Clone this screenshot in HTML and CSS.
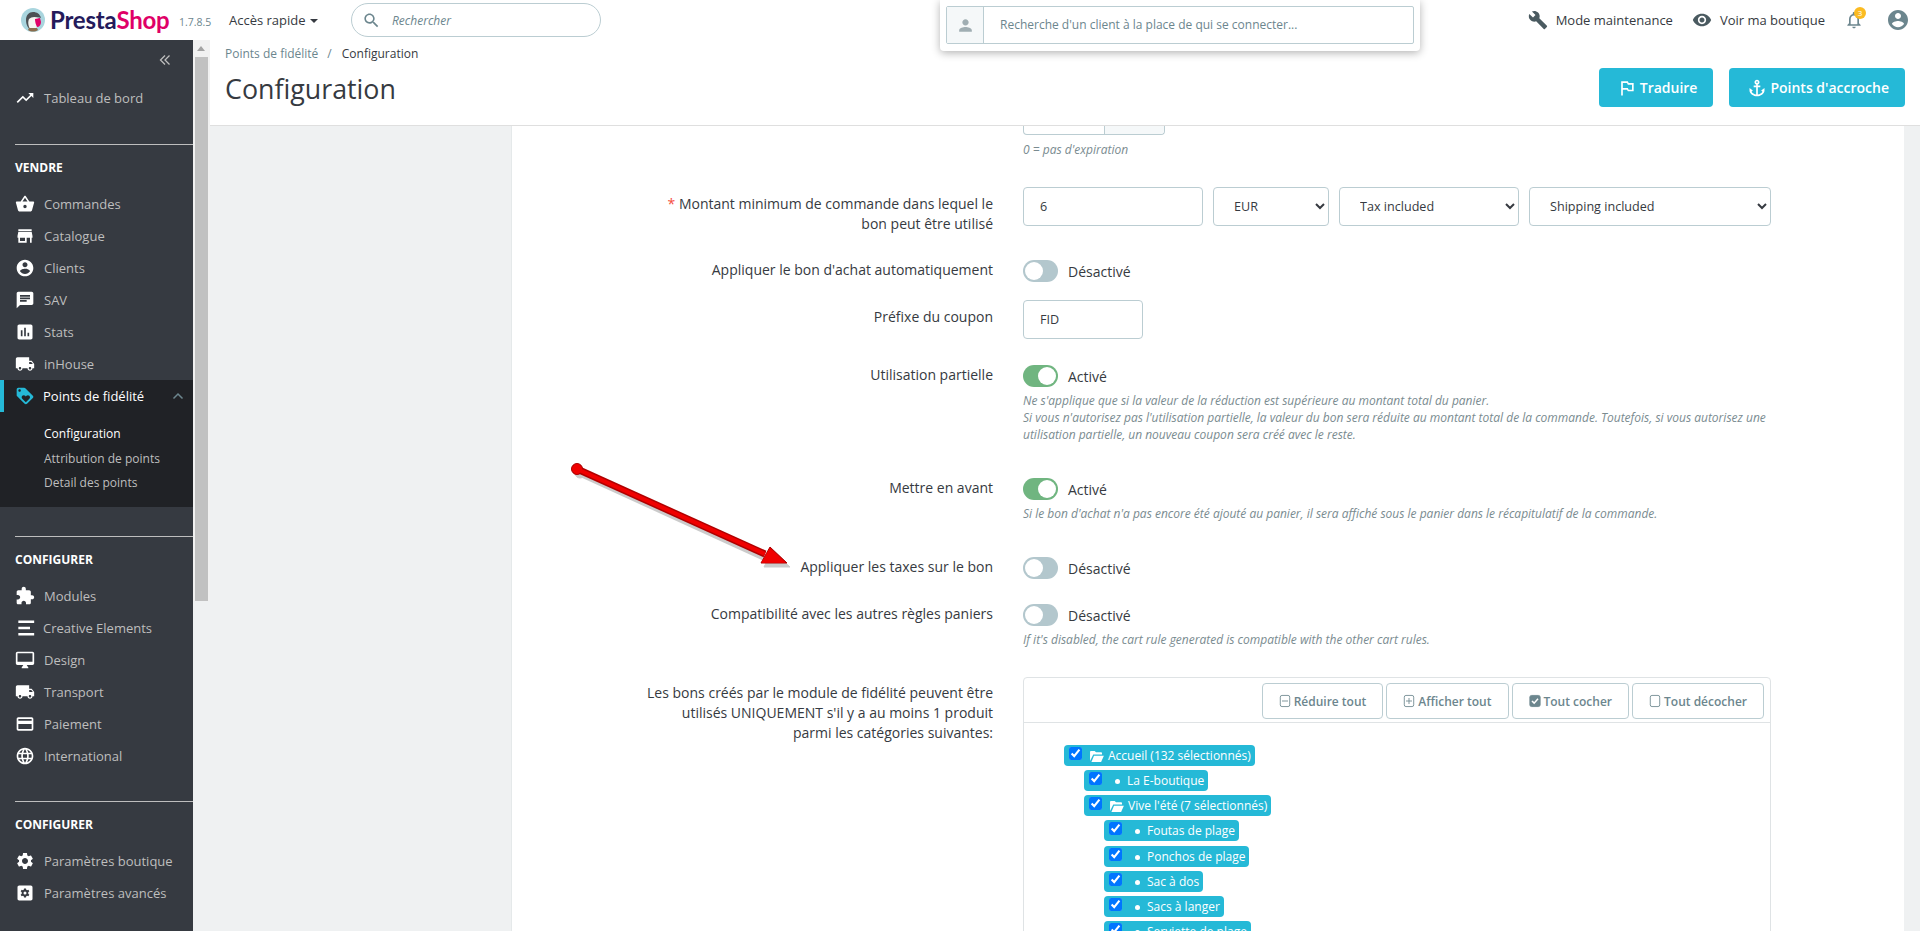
FILE: index.html
```html
<!DOCTYPE html>
<html>
    <head>
        <title>Configuration - PrestaShop</title>
        <meta charset="utf-8">
        <link rel="stylesheet" href="styles.css">
    </head>
    <body>
        <header class="topbar">
            <a class="logo">
                <svg class="puffin" viewBox="0 0 24 24">
                    <circle cx="12" cy="12" r="12" fill="#a9d5de"/>
                    <path d="M5 12c0-5 3-8 7-8s7 2 8 6c-2-1-4-1-6 0-3 2-4 7-3 12-4-1-6-5-6-10z" fill="#4c5054"/>
                    <path d="M8 11c2-2 6-3 9-1 1 4 0 9-3 11-3 1-5 0-6-2-1-3-1-6 0-8z" fill="#f4f4f0"/>
                    <path d="M14 11l5-1 1 4c0 3-2 5-4 5-1-2-2-5-2-8z" fill="#df0067"/>
                    <path d="M7 22c3 2 7 2 10 0l-1-2H8z" fill="#8a6d4d"/>
                </svg>
                <span class="logo-text"><span class="presta">Presta</span><span class="shop">Shop</span></span>
            </a>
            <span class="version">1.7.8.5</span>
            <a class="quick">Accès rapide <i class="caret"></i></a>
            <div class="search">
                <svg class="search-icon" viewBox="0 0 24 24"><path d="M15.5 14h-.79l-.28-.27C15.41 12.59 16 11.11 16 9.5 16 5.91 13.09 3 9.5 3S3 5.91 3 9.5 5.91 16 9.5 16c1.61 0 3.09-.59 4.23-1.57l.27.28v.79l5 4.99L20.49 19l-4.99-5zm-6 0C7.01 14 5 11.99 5 9.5S7.01 5 9.5 5 14 7.01 14 9.5 11.99 14 9.5 14z"/></svg>
                <span>Rechercher</span>
            </div>
            <div class="top-right">
                <a class="top-link">
                    <svg viewBox="0 0 24 24"><path d="M22.7 19l-9.1-9.1c.9-2.3.4-5-1.5-6.9-2-2-5-2.4-7.4-1.3L9 6 6 9 1.6 4.7C.4 7.1.9 10.1 2.9 12.1c1.9 1.9 4.6 2.4 6.9 1.5l9.1 9.1c.4.4 1 .4 1.4 0l2.3-2.3c.5-.4.5-1.1.1-1.4z"/></svg>
                    Mode maintenance
                </a>
                <a class="top-link">
                    <svg viewBox="0 0 24 24"><path d="M12 4.5C7 4.5 2.73 7.61 1 12c1.73 4.39 6 7.5 11 7.5s9.27-3.11 11-7.5c-1.73-4.39-6-7.5-11-7.5zM12 17c-2.76 0-5-2.24-5-5s2.24-5 5-5 5 2.24 5 5-2.24 5-5 5zm0-8c-1.66 0-3 1.34-3 3s1.34 3 3 3 3-1.34 3-3-1.34-3-3-3z"/></svg>
                    Voir ma boutique
                </a>
                <a class="bell">
                    <svg viewBox="0 0 24 24"><path d="M12 22c1.1 0 2-.9 2-2h-4c0 1.1.9 2 2 2zm6-6v-5c0-3.07-1.63-5.64-4.5-6.32V4c0-.83-.67-1.5-1.5-1.5s-1.5.67-1.5 1.5v.68C7.64 5.36 6 7.92 6 11v5l-2 2v1h16v-1l-2-2zm-2 1H8v-6c0-2.48 1.51-4.5 4-4.5s4 2.02 4 4.5v6z"/></svg>
                    <span class="badge">3</span>
                </a>
                <svg class="avatar" viewBox="2 2 20 20"><path d="M12 2C6.48 2 2 6.48 2 12s4.48 10 10 10 10-4.48 10-10S17.52 2 12 2zm0 3c1.66 0 3 1.34 3 3s-1.34 3-3 3-3-1.34-3-3 1.34-3 3-3zm0 14.2c-2.5 0-4.71-1.28-6-3.22.03-1.99 4-3.08 6-3.08 1.99 0 5.97 1.09 6 3.08-1.29 1.94-3.5 3.22-6 3.22z"/></svg>
            </div>
        </header>

        <div class="client-pop">
            <div class="client-group">
                <span class="client-addon"><svg viewBox="0 0 24 24"><path d="M12 12c2.21 0 4-1.79 4-4s-1.79-4-4-4-4 1.79-4 4 1.79 4 4 4zm0 2c-2.67 0-8 1.34-8 4v2h16v-2c0-2.66-5.33-4-8-4z"/></svg></span>
                <span class="client-input">Recherche d'un client à la place de qui se connecter...</span>
            </div>
        </div>

        <div class="layout">
            <nav class="sidebar">
                <div class="collapse">
                    <svg viewBox="0 0 14 14"><path d="M7 2.5L2.5 7 7 11.5M11.5 2.5L7 7l4.5 4.5"/></svg>
                </div>
                <ul class="menu first">
                    <li><svg viewBox="0 0 24 24"><path d="M16 6l2.29 2.29-4.88 4.88-4-4L2 16.59 3.41 18l6-6 4 4 6.3-6.29L22 12V6z"/></svg>Tableau de bord</li>
                </ul>

                <div class="section">
                    <h4>VENDRE</h4>
                    <ul class="menu">
                        <li><svg viewBox="0 0 24 24"><path d="M17.21 9l-4.38-6.56c-.19-.28-.51-.42-.83-.42-.32 0-.64.14-.83.43L6.79 9H2c-.55 0-1 .45-1 1 0 .09.01.18.04.27l2.54 9.27c.23.84 1 1.46 1.92 1.46h13c.92 0 1.69-.62 1.93-1.46l2.54-9.27L23 10c0-.55-.45-1-1-1h-4.79zM9 9l3-4.4L15 9H9zm3 8c-1.1 0-2-.9-2-2s.9-2 2-2 2 .9 2 2-.9 2-2 2z"/></svg>Commandes</li>
                        <li><svg viewBox="0 0 24 24"><path d="M20 4H4v2h16V4zm1 10v-2l-1-5H4l-1 5v2h1v6h10v-6h4v6h2v-6h1zm-9 4H6v-4h6v4z"/></svg>Catalogue</li>
                        <li><svg viewBox="0 0 24 24"><path d="M12 2C6.48 2 2 6.48 2 12s4.48 10 10 10 10-4.48 10-10S17.52 2 12 2zm0 3c1.66 0 3 1.34 3 3s-1.34 3-3 3-3-1.34-3-3 1.34-3 3-3zm0 14.2c-2.5 0-4.71-1.28-6-3.22.03-1.99 4-3.08 6-3.08 1.99 0 5.97 1.09 6 3.08-1.29 1.94-3.5 3.22-6 3.22z"/></svg>Clients</li>
                        <li><svg viewBox="0 0 24 24"><path d="M20 2H4c-1.1 0-1.99.9-1.99 2L2 22l4-4h14c1.1 0 2-.9 2-2V4c0-1.1-.9-2-2-2zM6 9h12v2H6V9zm8 5H6v-2h8v2zm4-6H6V6h12v2z"/></svg>SAV</li>
                        <li><svg viewBox="0 0 24 24"><path d="M19 3H5c-1.1 0-2 .9-2 2v14c0 1.1.9 2 2 2h14c1.1 0 2-.9 2-2V5c0-1.1-.9-2-2-2zM9 17H7v-7h2v7zm4 0h-2V7h2v10zm4 0h-2v-4h2v4z"/></svg>Stats</li>
                        <li><svg viewBox="0 0 24 24"><path d="M20 8h-3V4H3c-1.1 0-2 .9-2 2v11h2c0 1.66 1.34 3 3 3s3-1.34 3-3h6c0 1.66 1.34 3 3 3s3-1.34 3-3h2v-5l-3-4zM6 18.5c-.83 0-1.5-.67-1.5-1.5s.67-1.5 1.5-1.5 1.5.67 1.5 1.5-.67 1.5-1.5 1.5zm13.5-9l1.96 2.5H17V9.5h2.5zm-1.5 9c-.83 0-1.5-.67-1.5-1.5s.67-1.5 1.5-1.5 1.5.67 1.5 1.5-.67 1.5-1.5 1.5z"/></svg>inHouse</li>
                    </ul>
                    <div class="active-group">
                        <div class="active-item">
                            <svg viewBox="0 0 24 24"><path d="M21.41 11.58l-9-9C12.05 2.22 11.55 2 11 2H4c-1.1 0-2 .9-2 2v7c0 .55.22 1.05.59 1.42l9 9c.36.36.86.58 1.41.58s1.05-.22 1.41-.59l7-7c.37-.36.59-.86.59-1.41s-.23-1.06-.59-1.42zM5.5 7C4.67 7 4 6.33 4 5.5S4.67 4 5.5 4 7 4.67 7 5.5 6.33 7 5.5 7zm11.77 8.27L13 19.54l-4.27-4.27C8.28 14.81 8 14.19 8 13.5c0-1.38 1.12-2.5 2.5-2.5.69 0 1.32.28 1.77.74l.73.72.73-.73c.45-.45 1.08-.73 1.77-.73 1.38 0 2.5 1.12 2.5 2.5 0 .69-.28 1.32-.73 1.77z"/></svg>
                            Points de fidélité
                            <svg class="chevron" viewBox="0 0 14 14"><path d="M2.5 9.5L7 5l4.5 4.5"/></svg>
                        </div>
                        <ul class="submenu">
                            <li class="current">Configuration</li>
                            <li>Attribution de points</li>
                            <li>Detail des points</li>
                        </ul>
                    </div>
                </div>

                <div class="section">
                    <h4>CONFIGURER</h4>
                    <ul class="menu">
                        <li><svg viewBox="0 0 24 24"><path d="M20.5 11H19V7c0-1.1-.9-2-2-2h-4V3.5C13 2.12 11.88 1 10.5 1S8 2.12 8 3.5V5H4c-1.1 0-1.99.9-1.99 2v3.8H3.5c1.49 0 2.7 1.21 2.7 2.7s-1.21 2.7-2.7 2.7H2V20c0 1.1.9 2 2 2h3.8v-1.5c0-1.49 1.21-2.7 2.7-2.7 1.49 0 2.7 1.21 2.7 2.7V22H17c1.1 0 2-.9 2-2v-4h1.5c1.38 0 2.5-1.12 2.5-2.5S21.88 11 20.5 11z"/></svg>Modules</li>
                        <li class="tight"><svg viewBox="0 0 24 24"><path d="M4 3h19v3H4zM4 10.5h14v3H4zM4 18h19v3H4z"/></svg>Creative Elements</li>
                        <li><svg viewBox="0 0 24 24"><path d="M21 2H3c-1.1 0-2 .9-2 2v12c0 1.1.9 2 2 2h7l-2 3v1h8v-1l-2-3h7c1.1 0 2-.9 2-2V4c0-1.1-.9-2-2-2zm0 12H3V4h18v10z"/></svg>Design</li>
                        <li><svg viewBox="0 0 24 24"><path d="M20 8h-3V4H3c-1.1 0-2 .9-2 2v11h2c0 1.66 1.34 3 3 3s3-1.34 3-3h6c0 1.66 1.34 3 3 3s3-1.34 3-3h2v-5l-3-4zM6 18.5c-.83 0-1.5-.67-1.5-1.5s.67-1.5 1.5-1.5 1.5.67 1.5 1.5-.67 1.5-1.5 1.5zm13.5-9l1.96 2.5H17V9.5h2.5zm-1.5 9c-.83 0-1.5-.67-1.5-1.5s.67-1.5 1.5-1.5 1.5.67 1.5 1.5-.67 1.5-1.5 1.5z"/></svg>Transport</li>
                        <li><svg viewBox="0 0 24 24"><path d="M20 4H4c-1.11 0-1.99.89-1.99 2L2 18c0 1.11.89 2 2 2h16c1.11 0 2-.89 2-2V6c0-1.11-.89-2-2-2zm0 14H4v-6h16v6zm0-10H4V6h16v2z"/></svg>Paiement</li>
                        <li><svg viewBox="0 0 24 24"><path d="M11.99 2C6.47 2 2 6.48 2 12s4.47 10 9.99 10C17.52 22 22 17.52 22 12S17.52 2 11.99 2zm6.93 6h-2.95c-.32-1.25-.78-2.45-1.38-3.56 1.84.63 3.37 1.91 4.33 3.56zM12 4.04c.83 1.2 1.48 2.53 1.91 3.96h-3.82c.43-1.43 1.08-2.76 1.91-3.96zM4.26 14C4.1 13.36 4 12.69 4 12s.1-1.36.26-2h3.38c-.08.66-.14 1.32-.14 2 0 .68.06 1.34.14 2H4.26zm.82 2h2.95c.32 1.25.78 2.45 1.38 3.56-1.84-.63-3.37-1.9-4.33-3.56zm2.95-8H5.08c.96-1.66 2.49-2.93 4.33-3.56C8.81 5.55 8.35 6.75 8.03 8zM12 19.96c-.83-1.2-1.48-2.53-1.91-3.96h3.82c-.43 1.43-1.08 2.76-1.91 3.96zM14.34 14H9.66c-.09-.66-.16-1.32-.16-2 0-.68.07-1.35.16-2h4.68c.09.65.16 1.32.16 2 0 .68-.07 1.34-.16 2zm.25 5.56c.6-1.11 1.06-2.31 1.38-3.56h2.95c-.96 1.65-2.49 2.93-4.33 3.56zM16.36 14c.08-.66.14-1.32.14-2 0-.68-.06-1.34-.14-2h3.38c.16.64.26 1.31.26 2s-.1 1.36-.26 2h-3.38z"/></svg>International</li>
                    </ul>
                </div>

                <div class="section">
                    <h4>CONFIGURER</h4>
                    <ul class="menu">
                        <li><svg viewBox="0 0 24 24"><path d="M19.14 12.94c.04-.3.06-.61.06-.94 0-.32-.02-.64-.07-.94l2.03-1.58c.18-.14.23-.41.12-.61l-1.92-3.32c-.12-.22-.37-.29-.59-.22l-2.39.96c-.5-.38-1.03-.7-1.62-.94l-.36-2.54c-.04-.24-.24-.41-.48-.41h-3.84c-.24 0-.43.17-.47.41l-.36 2.54c-.59.24-1.13.57-1.62.94l-2.39-.96c-.22-.08-.47 0-.59.22L2.74 8.87c-.12.21-.08.47.12.61l2.03 1.58c-.05.3-.09.63-.09.94s.02.64.07.94l-2.03 1.58c-.18.14-.23.41-.12.61l1.92 3.32c.12.22.37.29.59.22l2.39-.96c.5.38 1.03.7 1.62.94l.36 2.54c.05.24.24.41.48.41h3.84c.24 0 .44-.17.47-.41l.36-2.54c.59-.24 1.13-.56 1.62-.94l2.39.96c.22.08.47 0 .59-.22l1.92-3.32c.12-.22.07-.47-.12-.61l-2.01-1.58zM12 15.6c-1.98 0-3.6-1.62-3.6-3.6s1.62-3.6 3.6-3.6 3.6 1.62 3.6 3.6-1.62 3.6-3.6 3.6z"/></svg>Paramètres boutique</li>
                        <li><svg viewBox="0 0 24 24"><path fill-rule="evenodd" d="M19 3H5c-1.1 0-2 .9-2 2v14c0 1.1.9 2 2 2h14c1.1 0 2-.9 2-2V5c0-1.1-.9-2-2-2zM10.8 6.5h2.4l.3 1.7 1 .5 1.5-.7 1.2 2-1.3 1.1v1.8l1.3 1.1-1.2 2-1.5-.7-1 .5-.3 1.7h-2.4l-.3-1.7-1-.5-1.5.7-1.2-2 1.3-1.1v-1.800l-1.300-1.100 1.200-2 1.500.7 1-.5zM12 10.200a1.800 1.800 0 100 3.600 1.800 1.800 0 000-3.600z"/></svg>Paramètres avancés</li>
                    </ul>
                </div>
            </nav>

            <div class="scrollbar">
                <div class="scroll-up"><i></i></div>
                <div class="scroll-thumb"></div>
            </div>

            <main class="content">
                <div class="page-head">
                    <div class="page-title">
                        <div class="breadcrumb"><span>Points de fidélité</span><em>/</em><strong>Configuration</strong></div>
                        <h1>Configuration</h1>
                    </div>
                    <div class="page-actions">
                        <a class="btn">
                            <svg viewBox="0 0 24 24"><path d="M14 6l-1-2H5v17h2v-7h5l1 2h7V6h-6zm4 8h-4l-1-2H7V6h5l1 2h5v6z"/></svg>
                            Traduire
                        </a>
                        <a class="btn">
                            <svg viewBox="0 0 24 24"><path d="M17 15l1.55 1.55c-.96 1.69-3.33 3.04-5.55 3.37V11h3V9h-3V7.82C14.16 7.4 15 6.3 15 5c0-1.65-1.35-3-3-3S9 3.35 9 5c0 1.3.84 2.4 2 2.82V9H8v2h3v8.92c-2.22-.33-4.59-1.68-5.55-3.37L7 15l-4-3v3c0 3.88 4.92 7 9 7s9-3.12 9-7v-3l-4 3zM12 4c.55 0 1 .45 1 1s-.45 1-1 1-1-.45-1-1 .45-1 1-1z"/></svg>
                            Points d'accroche
                        </a>
                    </div>
                </div>

                <div class="scroll-area">
                    <form class="panel">
                        <div class="row mb-29">
                            <label></label>
                            <div class="control">
                                <div class="cut-group"><span></span><span class="cut-addon"></span></div>
                                <p class="help help-first">0 = pas d'expiration</p>
                            </div>
                        </div>

                        <div class="row mb-26">
                            <label class="label-input"><span class="required">*</span> Montant minimum de commande dans lequel le bon peut être utilisé</label>
                            <div class="control fields">
                                <input class="input w-amount" type="text" value="6">
                                <select class="input w-cur"><option>EUR</option></select>
                                <select class="input w-tax"><option>Tax included</option></select>
                                <select class="input w-ship"><option>Shipping included</option></select>
                            </div>
                        </div>

                        <div class="row mb-18">
                            <label>Appliquer le bon d'achat automatiquement</label>
                            <div class="control">
                                <div class="switch-line"><span class="switch"></span>Désactivé</div>
                            </div>
                        </div>

                        <div class="row mb-26">
                            <label class="label-input">Préfixe du coupon</label>
                            <div class="control">
                                <input class="input w-prefix" type="text" value="FID">
                            </div>
                        </div>

                        <div class="row mb-35">
                            <label>Utilisation partielle</label>
                            <div class="control">
                                <div class="switch-line"><span class="switch on"></span>Activé</div>
                                <p class="help">Ne s'applique que si la valeur de la réduction est supérieure au montant total du panier.<br>Si vous n'autorisez pas l'utilisation partielle, la valeur du bon sera réduite au montant total de la commande. Toutefois, si vous autorisez une utilisation partielle, un nouveau coupon sera créé avec le reste.</p>
                            </div>
                        </div>

                        <div class="row mb-35">
                            <label>Mettre en avant</label>
                            <div class="control">
                                <div class="switch-line"><span class="switch on"></span>Activé</div>
                                <p class="help">Si le bon d'achat n'a pas encore été ajouté au panier, il sera affiché sous le panier dans le récapitulatif de la commande.</p>
                            </div>
                        </div>

                        <div class="row mb-25">
                            <label>Appliquer les taxes sur le bon</label>
                            <div class="control">
                                <div class="switch-line"><span class="switch"></span>Désactivé</div>
                            </div>
                        </div>

                        <div class="row mb-29">
                            <label>Compatibilité avec les autres règles paniers</label>
                            <div class="control">
                                <div class="switch-line"><span class="switch"></span>Désactivé</div>
                                <p class="help">If it's disabled, the cart rule generated is compatible with the other cart rules.</p>
                            </div>
                        </div>

                        <div class="row">
                            <label class="label-tree">Les bons créés par le module de fidélité peuvent être utilisés UNIQUEMENT s'il y a au moins 1 produit parmi les catégories suivantes:</label>
                            <div class="control tree-panel">
                                <div class="tree-tools">
                                    <a class="tool"><svg viewBox="0 0 14 16"><rect x="1.500" y="1.500" width="11" height="13" rx="2"/><path d="M3.500 8h7"/></svg>Réduire tout</a>
                                    <a class="tool"><svg viewBox="0 0 14 16"><rect x="1.500" y="1.500" width="11" height="13" rx="2"/><path d="M3.500 8h7M7 4.500v7"/></svg>Afficher tout</a>
                                    <a class="tool"><svg viewBox="0 0 14 16"><rect class="filled" x="1" y="1.500" width="12" height="13" rx="2"/><path class="tick" d="M3.500 8l2.500 2.500 4.500-5"/></svg>Tout cocher</a>
                                    <a class="tool"><svg viewBox="0 0 14 16"><rect x="1.500" y="1.500" width="11" height="13" rx="2"/></svg>Tout décocher</a>
                                </div>
                                <ul class="tree">
                                    <li>
                                        <span class="node"><input type="checkbox" checked><svg class="folder" viewBox="0 0 16 13"><path d="M1 12V2c0-.6.4-1 1-1h4l1.500 1.500H13c.6 0 1 .4 1 1V5H4.500L1 12zm1.500 1L5.300 6.200H16L13 13z"/></svg>Accueil (132 sélectionnés)</span>
                                        <ul>
                                            <li><span class="node"><input type="checkbox" checked><i class="dot"></i>La E-boutique</span></li>
                                            <li>
                                                <span class="node"><input type="checkbox" checked><svg class="folder" viewBox="0 0 16 13"><path d="M1 12V2c0-.6.4-1 1-1h4l1.500 1.500H13c.6 0 1 .4 1 1V5H4.500L1 12zm1.500 1L5.300 6.200H16L13 13z"/></svg>Vive l'été (7 sélectionnés)</span>
                                                <ul>
                                                    <li><span class="node"><input type="checkbox" checked><i class="dot"></i>Foutas de plage</span></li>
                                                    <li><span class="node"><input type="checkbox" checked><i class="dot"></i>Ponchos de plage</span></li>
                                                    <li><span class="node"><input type="checkbox" checked><i class="dot"></i>Sac à dos</span></li>
                                                    <li><span class="node"><input type="checkbox" checked><i class="dot"></i>Sacs à langer</span></li>
                                                    <li><span class="node"><input type="checkbox" checked><i class="dot"></i>Serviette de plage</span></li>
                                                </ul>
                                            </li>
                                        </ul>
                                    </li>
                                </ul>
                            </div>
                        </div>
                    </form>
                </div>
            </main>
        </div>

        <!-- annotation drawn on top of the screenshot -->
        <svg class="arrow" viewBox="0 0 230 110">
            <g class="arrow-shadow">
                <path d="M10 13L198 99" stroke-width="7"/>
                <circle cx="10" cy="13" r="5"/>
                <path d="M202 91L220 107 194 107z"/>
            </g>
            <g class="arrow-edge">
                <path d="M7 9L195 94" stroke-width="7"/>
                <circle cx="7" cy="9" r="5.500"/>
                <path d="M200 87L217 103 191 103z"/>
            </g>
            <g class="arrow-red">
                <path d="M7 9L195 94" stroke-width="4"/>
                <circle cx="7" cy="9" r="4.500"/>
                <path d="M200 88.500L215 102.300 192 102.300z"/>
            </g>
        </svg>
    </body>
</html>
```

FILE: styles.css
```css
* {
    box-sizing: border-box;
}
html, body {
    margin: 0;
    height: 100%;
    overflow: hidden;
}
body {
    display: flex;
    flex-direction: column;
    background: #eff1f2;
    color: #363a41;
    font-family: "Open Sans", "Liberation Sans", sans-serif;
    font-size: 14px;
}
ul {
    list-style: none;
    margin: 0;
    padding: 0;
}

/* top bar */
.topbar {
    flex: 0 0 40px;
    display: flex;
    align-items: center;
    background: #fff;
    padding-left: 21px;
}
.logo {
    display: flex;
    align-items: center;
    width: 158px;
}
.puffin {
    width: 24px;
    height: 24px;
}
.logo-text {
    margin-left: 5px;
    font-family: Lato, sans-serif;
    font-size: 24px;
    font-weight: 700;
    letter-spacing: -.2px;
    line-height: 40px;
}
.presta {
    color: #251b5b;
}
.shop {
    color: #df0067;
}
.version {
    width: 50px;
    padding-top: 3px;
    font-size: 10.500px;
    color: #6c868e;
}
.quick {
    width: 122px;
    font-size: 13px;
    white-space: nowrap;
}
.caret {
    display: inline-block;
    vertical-align: 2px;
    margin-left: 1px;
    border: 4px solid transparent;
    border-top-color: #363a41;
    border-bottom: 0;
}
.search {
    width: 250px;
    height: 34px;
    display: flex;
    align-items: center;
    border: 1px solid #bbcdd2;
    border-radius: 17px;
    padding-left: 10px;
    font-size: 12px;
    font-style: italic;
    color: #6c868e;
}
.search-icon {
    width: 19px;
    height: 19px;
    margin-right: 11px;
    fill: #6c868e;
}
.top-right {
    margin-left: auto;
    display: flex;
    align-items: center;
    padding-right: 12px;
}
.top-link {
    display: flex;
    align-items: center;
    gap: 8px;
    margin-right: 19px;
    font-size: 13px;
}
.top-link svg {
    width: 20px;
    height: 20px;
    fill: #4a5a60;
}
.bell {
    position: relative;
    width: 20px;
    height: 20px;
    margin-right: 24px;
}
.bell svg {
    width: 20px;
    height: 20px;
    fill: #6c868e;
}
.badge {
    position: absolute;
    top: -3px;
    left: 10px;
    width: 12px;
    height: 12px;
    border-radius: 50%;
    background: #fbbb22;
    color: #fff;
    font-size: 8px;
    line-height: 12px;
    text-align: center;
}
.avatar {
    width: 20px;
    height: 20px;
    fill: #6c868e;
}

/* client search popover */
.client-pop {
    position: absolute;
    top: 0;
    left: 940px;
    width: 480px;
    height: 51px;
    padding: 6px;
    background: #fff;
    border-radius: 0 0 4px 4px;
    box-shadow: 0 2px 8px rgba(0, 0, 0, .3);
    z-index: 5;
}
.client-group {
    display: flex;
    height: 38px;
    border: 1px solid #bbcdd2;
    border-radius: 2px;
}
.client-addon {
    width: 37px;
    display: flex;
    align-items: center;
    justify-content: center;
    background: #f5f8f9;
    border-right: 1px solid #bbcdd2;
}
.client-addon svg {
    width: 19px;
    height: 19px;
    fill: #a0aeb3;
}
.client-input {
    padding: 0 16px;
    line-height: 36px;
    font-size: 12px;
    color: #6c868e;
}

.layout {
    flex: 1;
    display: flex;
    min-height: 0;
}

/* sidebar */
.sidebar {
    width: 193px;
    flex: none;
    background: #363a41;
    color: #bebebe;
    font-size: 13px;
}
.collapse {
    height: 42px;
    padding: 13px 0 0 158px;
}
.collapse svg {
    width: 14px;
    height: 14px;
    fill: none;
    stroke: #bebebe;
    stroke-width: 1.300;
}
.menu li {
    height: 32px;
    display: flex;
    align-items: center;
    padding: 0 0 1px 15px;
    white-space: nowrap;
}
.menu svg, .active-item svg {
    width: 20px;
    height: 20px;
    flex: none;
    margin-right: 9px;
    fill: #fff;
}
.menu .tight svg {
    margin-right: 8px;
}
.first {
    margin-bottom: 30px;
}
.section h4 {
    margin: 0 0 0 15px;
    height: 44px;
    border-top: 1px solid #bebebe;
    padding-top: 14px;
    font-size: 12px;
    line-height: 17px;
    font-weight: 700;
    color: #fff;
}
.section + .section {
    margin-top: 29px;
}
.active-group {
    background: #202226;
    height: 127px;
}
.active-item {
    position: relative;
    height: 32px;
    display: flex;
    align-items: center;
    border-left: 4px solid #25b9d7;
    color: #fff;
    padding-left: 11px;
}
.active-item svg {
    fill: #25b9d7;
    margin-right: 8px;
}
.active-item .chevron {
    position: absolute;
    right: 8px;
    top: 9px;
    width: 14px;
    height: 14px;
    margin: 0;
    fill: none;
    stroke: #6c868e;
    stroke-width: 1.500;
}
.submenu {
    padding: 10px 0 0 44px;
    font-size: 12px;
}
.submenu li {
    height: 24.500px;
    line-height: 24.500px;
}
.submenu .current {
    color: #fff;
}

/* scrollbar of the sidebar */
.scrollbar {
    width: 17px;
    flex: none;
    height: 561px;
    background: #f1f1f1;
    padding: 0 2px;
}
.scroll-up {
    height: 17px;
    padding: 6px 0 0 2px;
}
.scroll-up i {
    display: block;
    width: 0;
    border: 4px solid transparent;
    border-top: 0;
    border-bottom-color: #a3a3a3;
    border-bottom-width: 5px;
}
.scroll-thumb {
    width: 13px;
    height: 544px;
    background: #c1c1c1;
}

/* page */
.content {
    flex: 1;
    min-width: 0;
    display: flex;
    flex-direction: column;
}
.page-head {
    height: 86px;
    flex: none;
    display: flex;
    justify-content: space-between;
    background: #fff;
    border-bottom: 1px solid #dfdfdf;
    padding: 0 15px;
}
.breadcrumb {
    padding-top: 5px;
    font-size: 12px;
    line-height: 18px;
    color: #6c868e;
}
.breadcrumb em {
    font-style: normal;
    margin: 0 10px 0 9px;
}
.breadcrumb strong {
    font-weight: 400;
    color: #363a41;
}
h1 {
    margin: 8px 0 0;
    font-size: 26.800px;
    font-weight: 400;
    line-height: 36px;
}
.page-actions {
    display: flex;
    gap: 16px;
    padding-top: 28px;
}
.btn {
    height: 39px;
    display: flex;
    align-items: center;
    gap: 3px;
    padding: 0 16px 0 18px;
    border-radius: 4px;
    background: #25b9d7;
    color: #fff;
    font-size: 14px;
    font-weight: 600;
}
.btn svg {
    width: 20px;
    height: 20px;
    fill: #fff;
}

.scroll-area {
    flex: 1;
    min-height: 0;
    overflow: hidden;
    padding: 0 16px 0 301px;
}
.panel {
    background: #fff;
    padding-left: 132px;
    height: 100%;
    border-left: 1px solid #e5e9ea;
}
.row {
    display: flex;
    gap: 30px;
}
.row label {
    width: 349px;
    flex: none;
    text-align: right;
    font-size: 14px;
    line-height: 20px;
}
.label-input {
    padding-top: 7px;
}
.label-tree {
    padding-top: 6px;
}
.required {
    color: #f54c3e;
}
.control {
    width: 748px;
    flex: none;
}
.mb-18 { margin-bottom: 18px; }
.mb-25 { margin-bottom: 25px; }
.mb-26 { margin-bottom: 26px; }
.mb-29 { margin-bottom: 29px; }
.mb-35 { margin-bottom: 35px; }

.cut-group {
    display: flex;
    width: 142px;
    height: 9px;
    border: 1px solid #bbcdd2;
    border-top: 0;
    border-radius: 0 0 4px 4px;
}
.cut-group span {
    width: 80px;
}
.cut-group .cut-addon {
    flex: 1;
    background: #f5f8f9;
    border-left: 1px solid #bbcdd2;
    border-radius: 0 0 4px 0;
}
.help {
    margin: 5px 0 0;
    font-size: 12px;
    font-style: italic;
    line-height: 17px;
    color: #7a8b90;
}
.help-first {
    margin-top: 6px;
}
.fields {
    display: flex;
    gap: 10px;
}
.input {
    height: 39px;
    border: 1px solid #bbcdd2;
    border-radius: 4px;
    background: #fff;
    padding: 0 16px 1px;
    font-family: inherit;
    font-size: 12.600px;
    color: #363a41;
}
.w-amount { width: 180px; }
.w-cur { width: 116px; }
.w-tax { width: 180px; }
.w-ship { width: 242px; }
.w-prefix { width: 120px; }

.switch-line {
    display: flex;
    align-items: center;
    height: 22px;
    gap: 10px;
    font-size: 14px;
}
.switch {
    position: relative;
    width: 35px;
    height: 22px;
    border-radius: 11px;
    background: #b3c7cd;
}
.switch::after {
    content: "";
    position: absolute;
    top: 2px;
    left: 2px;
    width: 18px;
    height: 18px;
    border-radius: 50%;
    background: #fff;
}
.switch.on {
    background: #70b580;
}
.switch.on::after {
    left: 15px;
}

/* category tree */
.tree-panel {
    height: 300px;
    border: 1px solid #dfe3e5;
    border-radius: 4px 4px 0 0;
}
.tree-tools {
    height: 45px;
    display: flex;
    justify-content: flex-end;
    gap: 3px;
    padding: 5px 6px 0 0;
    border-bottom: 1px solid #dfe3e5;
}
.tool {
    height: 36px;
    display: flex;
    align-items: center;
    gap: 3px;
    padding: 0 16px;
    border: 1px solid #bbcdd2;
    border-radius: 4px;
    font-size: 12px;
    font-weight: 600;
    color: #6c868e;
}
.tool svg {
    width: 12px;
    height: 14px;
    fill: none;
    stroke: #6c868e;
}
.tool .filled {
    fill: #6c868e;
}
.tool .tick {
    stroke: #fff;
    stroke-width: 1.800;
}
.tree {
    padding: 22px 0 0 40px;
}
.tree ul {
    padding-left: 20px;
}
.tree li {
    padding-top: 4.150px;
}
.tree > li {
    padding-top: 0;
}
.node {
    display: inline-flex;
    align-items: center;
    height: 21px;
    padding: 0 4px 0 5px;
    border-radius: 4px;
    background: #25b9d7;
    color: #fff;
    font-size: 12px;
    white-space: nowrap;
}
.node input {
    width: 13px;
    height: 13px;
    margin: 0 7px 4px 0;
}
.folder {
    width: 15px;
    height: 12px;
    margin-right: 4px;
    fill: #fff;
}
.dot {
    width: 5px;
    height: 5px;
    margin: 2px 7px 0 6px;
    border-radius: 50%;
    background: #fff;
}

/* red arrow pasted over the page */
.arrow {
    position: absolute;
    top: 460px;
    left: 570px;
    width: 230px;
    height: 110px;
    z-index: 6;
}
.arrow-shadow {
    opacity: .2;
    fill: #000;
    stroke: #000;
}
.arrow-edge {
    fill: #b00000;
    stroke: #b00000;
}
.arrow-red {
    fill: #f00000;
    stroke: #f00000;
}
```
